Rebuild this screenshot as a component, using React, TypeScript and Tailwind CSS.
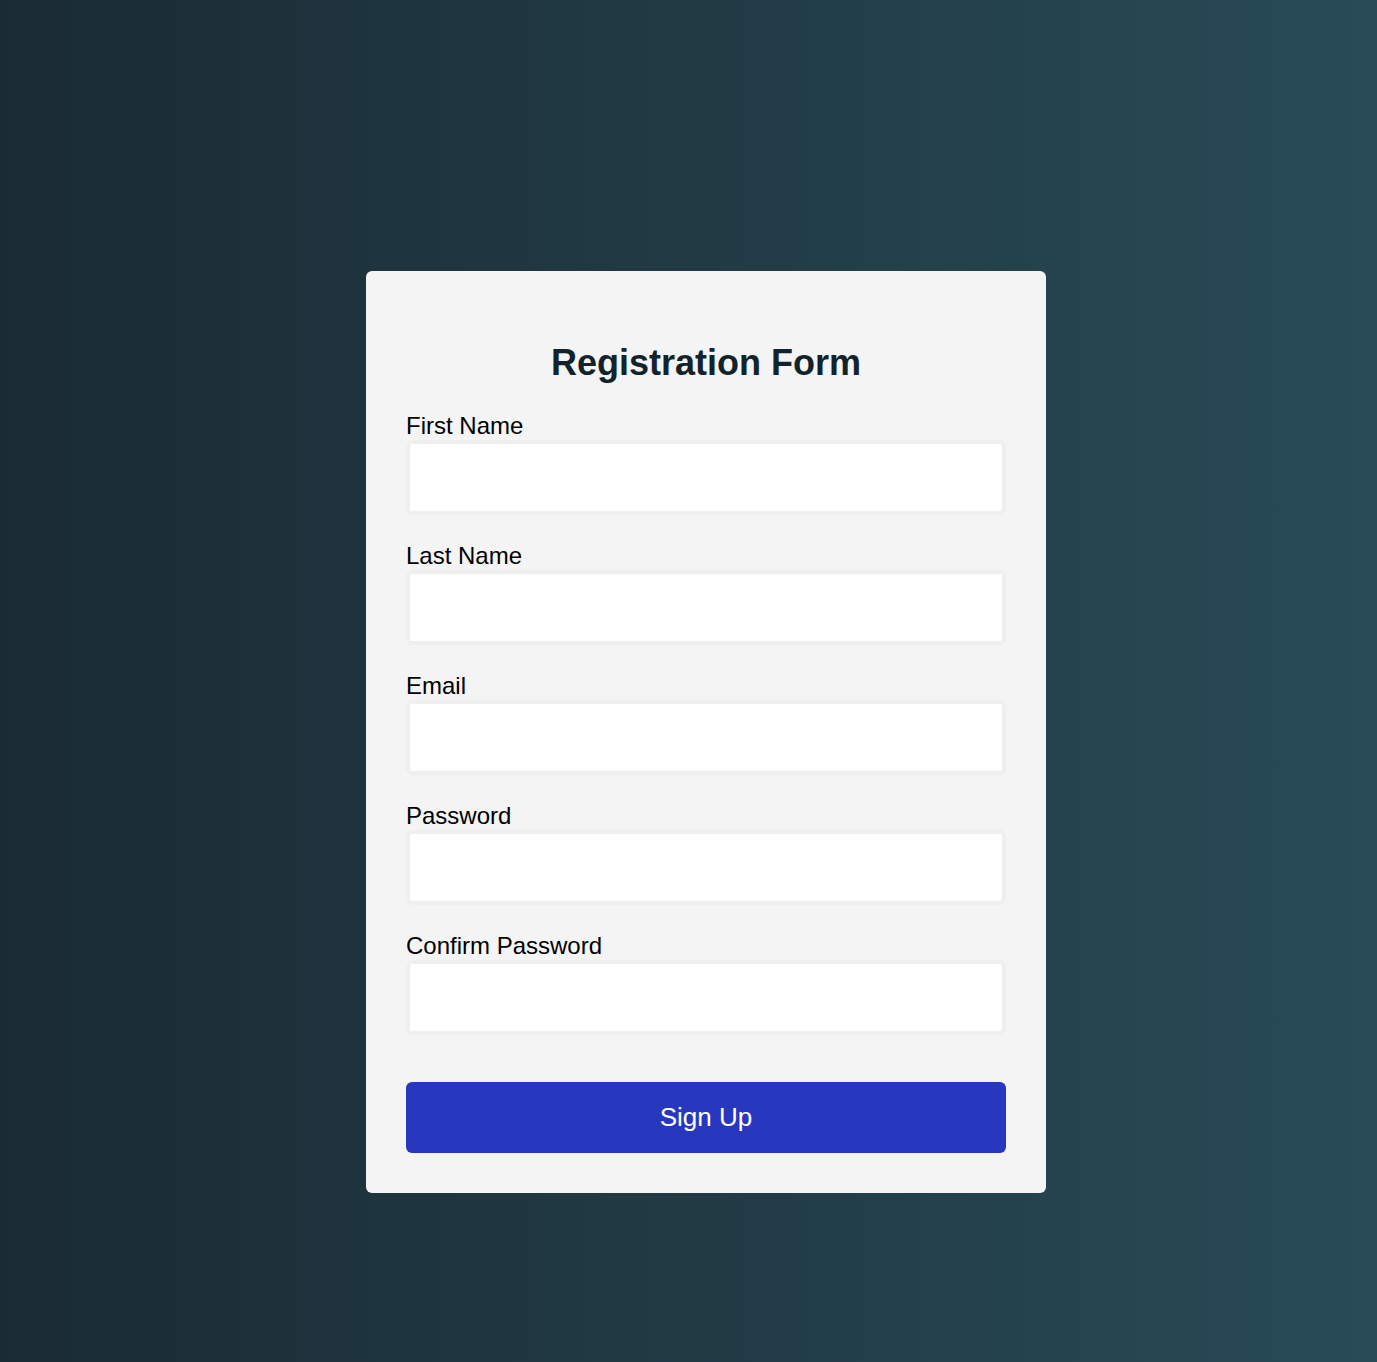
export default function App() {
  const fields = [
    { label: "First Name", type: "text" },
    { label: "Last Name", type: "text" },
    { label: "Email", type: "email" },
    { label: "Password", type: "password" },
    { label: "Confirm Password", type: "password" },
  ];

  return (
    <div
      className="flex min-h-screen justify-center bg-gradient-to-r from-[#1a2b34] to-[#284b57] pb-[169px] pl-[35px] pt-[271px]"
      style={{ fontFamily: '"Liberation Sans", Arial, sans-serif' }}
    >
      <form
        onSubmit={(e) => e.preventDefault()}
        className="flex h-[922px] w-[680px] flex-col rounded-[6px] bg-[#f4f4f4] px-10 pb-10"
      >
        <h2 className="mt-[72px] text-center text-[36px] font-bold leading-[40px] text-[#13232b]">
          Registration Form
        </h2>

        <div className="mt-[29px] flex flex-col">
          {fields.map((f) => (
            <div key={f.label} className="mb-[27px] flex flex-col">
              <label className="text-[24px] leading-[28px] text-black">
                {f.label}
              </label>
              <input
                type={f.type}
                className="h-[75px] w-full rounded-[6px] border-[4px] border-[#efefef] bg-white px-3 text-[20px] outline-none"
              />
            </div>
          ))}
        </div>

        <button
          type="submit"
          className="mt-[20px] h-[71px] w-full rounded-[6px] bg-[#2838be] text-[26px] text-white"
        >
          Sign Up
        </button>
      </form>
    </div>
  );
}
